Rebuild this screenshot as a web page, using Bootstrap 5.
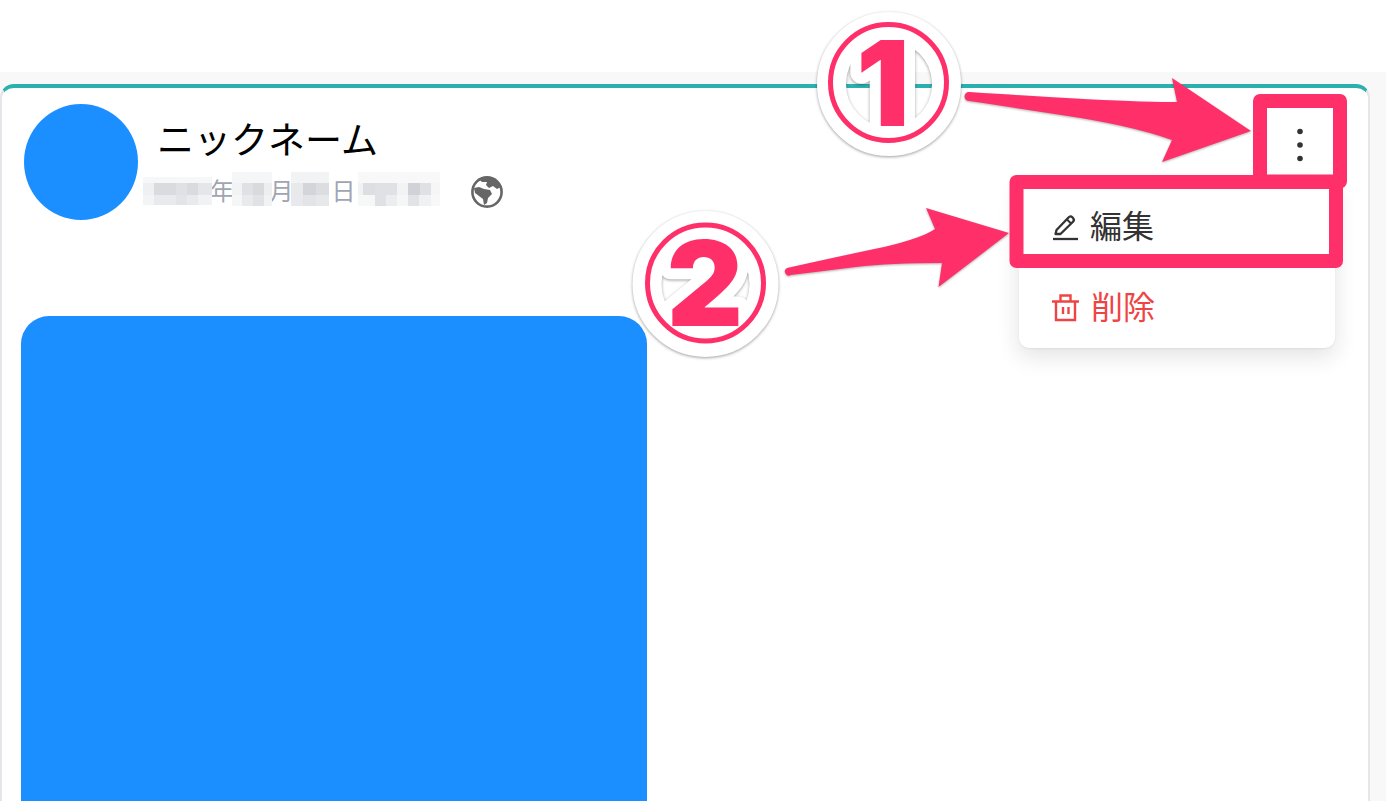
<!DOCTYPE html>
<html lang="ja">
<head>
<meta charset="utf-8">
<title>投稿メニュー</title>
<link href="https://cdn.jsdelivr.net/npm/bootstrap@5.3.0/dist/css/bootstrap.min.css" rel="stylesheet">
<style>
html,body{height:801px;overflow:hidden;background:#fff;font-family:"Liberation Sans","Noto Sans CJK JP",sans-serif}
.top-strip{height:72px;background:#fff}
.feed-area{height:729px;overflow:hidden;background:#f8f8f8;padding:12px 16px 0 0}
.post-card{height:900px;border-width:4px 2px 0 2px;border-style:solid;border-color:#2bb0b0 #e5e5ea #e5e5ea #e5e5ea;border-radius:14px;background:#fff}
.post-head{padding:16px 36px 0 22px}
.post-avatar{width:114px;height:116px;background:#1b8fff;flex:none}
.post-info{margin-left:5px}
.post-name{margin:14px 0 0 14px;font-size:37px;line-height:40px;color:#000;white-space:nowrap;font-family:"Noto Sans CJK JP",sans-serif}
.post-date{margin-top:14px;height:36px;color:#a0a5b3;font-size:24px;line-height:36px;font-family:"Noto Sans CJK JP",sans-serif}
.post-date span{display:block;text-align:center;white-space:nowrap;flex:none}
.unit-a{width:20px}.unit-b{width:19px}.unit-c{width:29px}
.unit-a,.unit-b,.unit-c{overflow:visible;display:flex!important;justify-content:center}
.mosaic{display:block;flex:none;height:36px;filter:blur(.7px)}
.globe-ic{margin:4px 0 0 31px;flex:none}
.more-wrap{margin:4px 0 0 auto;height:67px}
.more-btn{width:65px;height:67px;padding:6px 0 0;border:0;display:flex;align-items:center;justify-content:center;background:transparent}
.more-wrap .dropdown-menu{top:72px;left:auto;right:-3px;width:316px;height:168px;padding:6px 0 0;border:0;border-radius:10px;background:#fff;box-shadow:0 8px 22px rgba(30,30,40,.13),0 1px 2px rgba(0,0,0,.06);font-family:"Noto Sans CJK JP",sans-serif}
.more-wrap .dropdown-item{height:81px;padding:0 0 0 34px;font-size:32px;line-height:1;color:#333;display:flex;align-items:center;gap:11px;background:transparent}
.more-wrap .dropdown-item.is-danger{color:#ef4444;padding-left:33px}
.item-label{margin-bottom:6px}
.is-danger .item-label{margin-left:1px}
.post-media{width:626px;height:560px;margin:96px 0 0 19px;background:#1b8fff;border-radius:28px}
.note-layer{position:absolute;left:0;top:0;width:1386px;height:801px;pointer-events:none;z-index:2000}
.note-num{font-family:Inter,Roboto,"Liberation Sans",sans-serif;font-weight:900;fill:#ff3069;stroke:#fff;stroke-width:22px;paint-order:stroke;stroke-linejoin:round}
.note-halo{filter:drop-shadow(0 1px 1.5px rgba(0,0,0,.38))}
.arrow-shape{fill:#ff3069;filter:drop-shadow(0 1px 1px rgba(0,0,0,.3))}
</style>
</head>
<body>
<div class="top-strip"></div>
<main class="feed-area">
  <article class="card post-card">
    <header class="post-head d-flex">
      <div class="post-avatar rounded-circle"></div>
      <div class="post-info">
        <div class="post-name">ニックネーム</div>
        <div class="post-date d-flex">
          <svg class="mosaic" width="69" height="36" viewBox="0 0 69 36" aria-hidden="true"><rect y="5" width="69" height="6" fill="#f6f7f8"/><rect y="11" width="11" height="12" fill="#eff0f2"/><rect x="11" y="11" width="22" height="12" fill="#d9dbdf"/><rect x="33" y="11" width="11" height="12" fill="#dfe1e4"/><rect x="44" y="11" width="11" height="12" fill="#d9dbdf"/><rect x="55" y="11" width="14" height="12" fill="#e4e6e9"/><rect y="23" width="11" height="10" fill="#f3f4f5"/><rect x="11" y="23" width="22" height="10" fill="#e9eaed"/><rect x="33" y="23" width="11" height="10" fill="#e2e4e8"/><rect x="44" y="23" width="11" height="10" fill="#e9eaed"/><rect x="55" y="23" width="14" height="10" fill="#f1f2f4"/></svg>
          <span class="unit-a">年</span>
          <svg class="mosaic" width="40" height="36" viewBox="0 0 40 36" aria-hidden="true"><rect width="40" height="11" fill="#f5f6f7"/><rect y="11" width="10" height="12" fill="#f2f3f4"/><rect x="10" y="11" width="11" height="12" fill="#dfe1e4"/><rect x="21" y="11" width="11" height="12" fill="#d8dade"/><rect x="32" y="11" width="8" height="12" fill="#eceef0"/><rect y="23" width="10" height="11" fill="#f5f6f6"/><rect x="10" y="23" width="11" height="11" fill="#e9eaec"/><rect x="21" y="23" width="11" height="11" fill="#e0e2e6"/><rect x="32" y="23" width="8" height="11" fill="#f1f2f3"/></svg>
          <span class="unit-b">月</span>
          <svg class="mosaic" width="38" height="36" viewBox="0 0 38 36" aria-hidden="true"><rect width="38" height="11" fill="#f2f3f5"/><rect y="11" width="12" height="12" fill="#e8e9eb"/><rect x="12" y="11" width="13" height="12" fill="#d3d5da"/><rect x="25" y="11" width="13" height="12" fill="#dcdde1"/><rect y="23" width="12" height="11" fill="#e8e9ec"/><rect x="12" y="23" width="13" height="11" fill="#e3e4e7"/><rect x="25" y="23" width="13" height="11" fill="#e6e8ea"/></svg>
          <span class="unit-c">日</span>
          <svg class="mosaic" width="82" height="36" viewBox="0 0 82 36" aria-hidden="true"><rect width="82" height="11" fill="#f8f8f9"/><rect y="11" width="5" height="12" fill="#f1f2f3"/><rect x="5" y="11" width="12" height="12" fill="#dcdee2"/><rect x="17" y="11" width="22" height="12" fill="#dfe1e4"/><rect x="39" y="11" width="11" height="12" fill="#f2f3f4"/><rect x="50" y="11" width="12" height="12" fill="#d0d2d7"/><rect x="62" y="11" width="11" height="12" fill="#dfe1e4"/><rect x="73" y="11" width="9" height="12" fill="#f6f6f7"/><rect y="23" width="17" height="11" fill="#f6f7f7"/><rect x="17" y="23" width="11" height="11" fill="#dfe1e5"/><rect x="28" y="23" width="11" height="11" fill="#ecedef"/><rect x="39" y="23" width="11" height="11" fill="#f5f6f6"/><rect x="50" y="23" width="11" height="11" fill="#e1e3e6"/><rect x="61" y="23" width="12" height="11" fill="#f0f1f2"/><rect x="73" y="23" width="9" height="11" fill="#f8f8f9"/></svg>
          <svg class="globe-ic" width="32" height="32" viewBox="0 0 32 32" aria-label="公開"><circle cx="16" cy="16" r="14.6" fill="#fff" stroke="#666" stroke-width="2.6"/><path fill="#666" d="M8 3C13 1 20 1 24 3.500 27 5.500 29 8 30 11L26 13 22 10 18 12 15 9 16 6 11 6ZM3 12 8 11 13 13 19 14 21 18 17 22 16 27 13 29 12 23 8 20 4 17Z"/></svg>
        </div>
      </div>
      <div class="dropdown more-wrap">
        <button class="btn more-btn" type="button" aria-label="メニュー"><svg width="8" height="36" viewBox="0 0 8 36"><circle cx="4" cy="4.500" r="2.800" fill="#333"/><circle cx="4" cy="18" r="2.800" fill="#333"/><circle cx="4" cy="31.500" r="2.800" fill="#333"/></svg></button>
        <div class="dropdown-menu show">
          <a class="dropdown-item" href="#"><svg width="26" height="28" viewBox="0 0 26 28" fill="none" stroke="#333"><path stroke-width="2.300" stroke-linejoin="round" d="M2.500 21 3.500 17 15.500 4.500Q17.500 2.500 19.300 4.300L20 5Q21.800 7 20 8.800L7.500 21Z"/><path stroke-width="2" d="M14 6.500 18 10.500"/><path stroke-width="2.300" d="M0 26H25"/></svg><span class="item-label">編集</span></a>
          <a class="dropdown-item is-danger" href="#"><svg width="27" height="28" viewBox="0 0 27 28" fill="none" stroke="#ef4444" stroke-width="2.400"><path d="M0 7.500H27M8.500 7.500V1.500H18.500V7.500M4 7.500V26H23V7.500M11 13V20M16.500 13V20"/></svg><span class="item-label">削除</span></a>
        </div>
      </div>
    </header>
    <div class="post-media"></div>
  </article>
</main>
<svg class="note-layer" viewBox="0 0 1386 801">
  <rect x="1260" y="101" width="80" height="80.500" fill="none" stroke="#ff3069" stroke-width="14" stroke-linejoin="round"/>
  <rect x="1016.500" y="182" width="319.500" height="79" fill="none" stroke="#ff3069" stroke-width="14" stroke-linejoin="round"/>
  <path class="arrow-shape" d="M969 92Q1090 100 1140 101.500 1165 102 1177 102L1172 78 1251 131 1162 162 1172 140Q1130 125 1061 115 1010 107 969 101A4.500 4.500 0 0 1 969 92Z"/>
  <path class="arrow-shape" d="M787 268Q850 254 884 247 922 238 935 229L926 208 1009 233 938.500 287 942 263Q890 263 856 267L791 275A3.500 3.500 0 0 1 787 268Z"/>
  <g class="note-halo">
    <circle cx="889" cy="84" r="57.500" fill="none" stroke="#fff" stroke-width="29"/>
    <text class="note-num" x="883" y="126" text-anchor="middle" font-size="118">1</text>
  </g>
  <circle cx="888.500" cy="82.500" r="58" fill="none" stroke="#ff3069" stroke-width="5"/>
  <g class="note-halo">
    <circle cx="705.500" cy="284" r="58.500" fill="none" stroke="#fff" stroke-width="29"/>
    <text class="note-num" x="705" y="326" text-anchor="middle" font-size="118">2</text>
  </g>
  <circle cx="705.500" cy="283" r="58" fill="none" stroke="#ff3069" stroke-width="5"/>
</svg>
<script src="https://cdn.jsdelivr.net/npm/bootstrap@5.3.0/dist/js/bootstrap.bundle.min.js"></script>
</body>
</html>
